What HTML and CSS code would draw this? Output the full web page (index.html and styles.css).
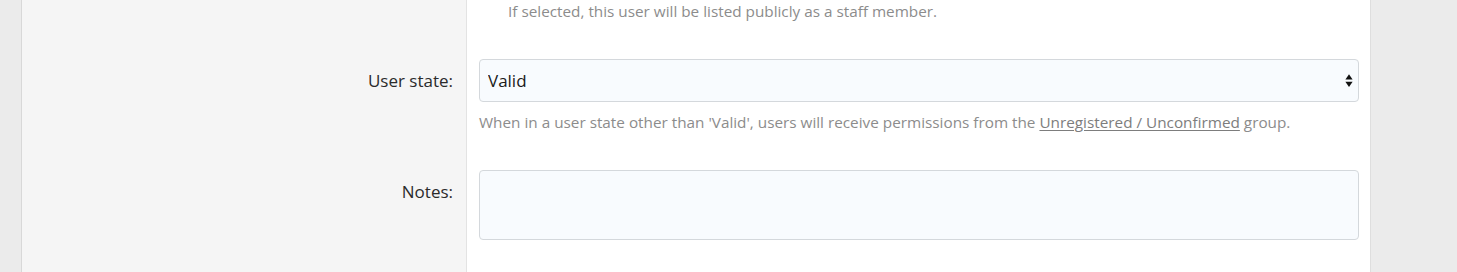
FILE: index.html
```html
<!DOCTYPE html>
<html lang="en">
<head>
<meta charset="utf-8">
<title>User options</title>
<link rel="stylesheet" href="styles.css">
</head>
<body>
<div class="page">
  <div class="block">
    <div class="row row-top">
      <div class="label"></div>
      <div class="field">
        <p class="hint hint-indent">If selected, this user will be listed publicly as a staff member.</p>
      </div>
    </div>
    <div class="row">
      <div class="label"><span>User state:</span></div>
      <div class="field">
        <div class="select-wrap">
          <select class="input select">
            <option>Valid</option>
            <option>Awaiting email confirmation</option>
            <option>Awaiting approval</option>
            <option>Rejected</option>
            <option>Disabled</option>
          </select>
          <svg class="arrows" width="8" height="14" viewBox="0 0 8 14" aria-hidden="true">
            <path d="M4 0.3 L7.6 5.6 L0.4 5.6 Z" fill="#111"/>
            <path d="M0.4 7.8 L7.6 7.8 L4 13.1 Z" fill="#111"/>
          </svg>
        </div>
        <p class="hint hint-explain">When in a user state other than 'Valid', users will receive permissions from the <a href="#">Unregistered / Unconfirmed</a> group.</p>
      </div>
    </div>
    <div class="row row-last">
      <div class="label"><span>Notes:</span></div>
      <div class="field">
        <textarea class="input textarea"></textarea>
      </div>
    </div>
  </div>
</div>
</body>
</html>
```

FILE: styles.css
```css
html, body {
  margin: 0;
  padding: 0;
  height: 100%;
  overflow: hidden;
}
body {
  background: #ebebeb;
  font-family: "Open Sans", "Noto Sans", "Liberation Sans", sans-serif;
  color: #141414;
}
.page {
  padding: 0 86px 0 21px;
  height: 100%;
  box-sizing: border-box;
}
.block {
  background: #fff;
  border-left: 1px solid #d8d8d8;
  border-right: 1px solid #dedede;
  height: 100%;
  box-sizing: border-box;
}
.row {
  display: grid;
  grid-template-columns: 445px 1fr;
}
.row-last {
  min-height: 120px;
}
.label {
  background: #f5f5f5;
  border-right: 1px solid #e3e3e3;
  box-sizing: border-box;
  text-align: right;
  padding: 23px 13px 0 0;
  font-size: 17px;
  line-height: 22px;
  color: #2b2b2b;
}
.field {
  padding: 12px 11px 25px 12px;
}
.row-top .field {
  padding: 0 11px 25px 12px;
}
.row-last .field {
  padding-bottom: 20px;
}
.hint {
  margin: 0;
  font-size: 15.3px;
  line-height: 22px;
  color: #8c8c8c;
}
.hint-indent {
  padding-left: 29px;
}
.hint-explain {
  margin-top: 9px;
}
.hint a {
  color: #7d7d7d;
  text-decoration: underline;
  text-underline-offset: 2px;
}
.input {
  display: block;
  width: 100%;
  box-sizing: border-box;
  background: #f8fbfe;
  border: 1px solid #d4d8dc;
  border-radius: 4px;
  font-family: inherit;
  color: #1a1a1a;
  margin: 0;
  outline: none;
}
.select-wrap {
  position: relative;
}
.select {
  height: 43px;
  appearance: none;
  -webkit-appearance: none;
  font-size: 17px;
  padding: 0 30px 0 8px;
}
.arrows {
  position: absolute;
  right: 6px;
  top: 14.5px;
  pointer-events: none;
}
.textarea {
  height: 70px;
  resize: none;
  font-size: 17px;
  padding: 8px;
}
```
